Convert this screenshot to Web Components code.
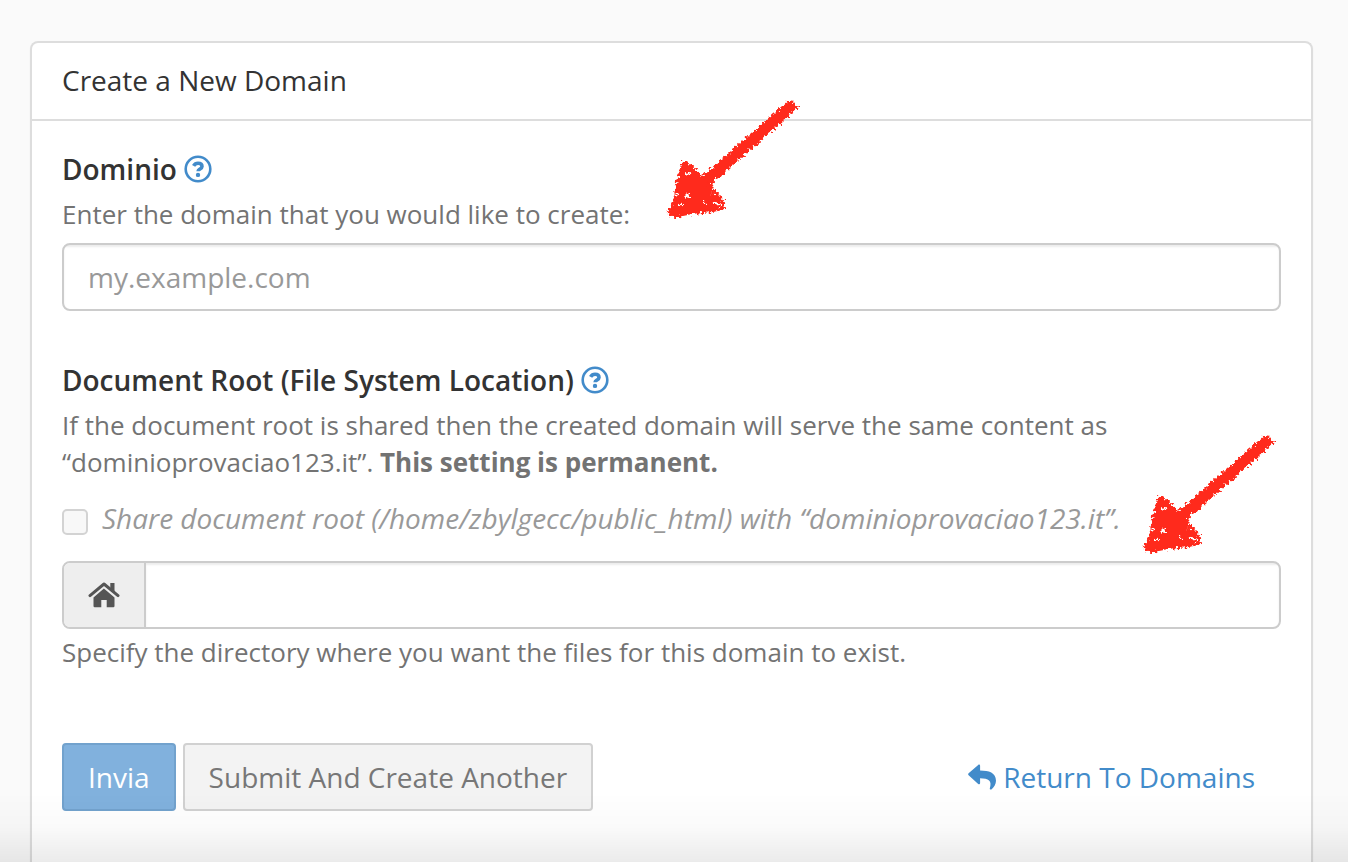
<!DOCTYPE html>
<html lang="en">
<head>
  <meta charset="utf-8">
  <meta name="viewport" content="width=device-width, initial-scale=1">
  <title>Create a New Domain</title>
  <style>
    body {
      margin: 0;
      background-color: #fafafa;
      font-family: "Open Sans", "Noto Sans", sans-serif;
    }
  </style>
</head>
<body>
  <domain-page></domain-page>

  <script>
    class HelpButton extends HTMLElement {
      constructor() {
        super();

        const shadow = this.attachShadow({ mode: "open" });

        shadow.innerHTML = `
          <style>
            :host {
              display: flex;
            }
            button {
              display: flex;
              padding: 0;
              border: 0;
              background: none;
              color: #428bca;
              cursor: pointer;
            }
            svg {
              width: 28px;
              height: 28px;
            }
          </style>

          <button type="button" aria-label="Help">
            <svg viewBox="0 0 28 28" fill="none" stroke="currentColor" aria-hidden="true">
              <circle cx="14" cy="14" r="12.3" stroke-width="2.6"/>
              <path d="M9.6 10.8C10.7 8.9 12.2 8.2 14 8.2c2.4 0 4 1.3 4 3.2 0 2.5-3.9 2.6-3.9 4.9" stroke-width="3.6"/>
              <circle cx="14" cy="19.9" r="2.2" fill="currentColor" stroke="none"/>
            </svg>
          </button>
        `;
      }
    }

    // Hand drawn arrow, pointing down and to the left
    class MarkerArrow extends HTMLElement {
      constructor() {
        super();

        const shadow = this.attachShadow({ mode: "open" });

        shadow.innerHTML = `
          <style>
            :host {
              display: block;
              pointer-events: none;
            }
            svg {
              display: block;
              width: 145px;
              height: 128px;
              overflow: visible;
            }
          </style>

          <svg viewBox="0 0 145 128" aria-hidden="true">
            <defs>
              <filter id="chalk" x="-10" y="-10" width="165" height="148" filterUnits="userSpaceOnUse" color-interpolation-filters="sRGB">
                <feTurbulence type="fractalNoise" baseFrequency="0.35" numOctaves="3" seed="4" result="noise"/>
                <feDisplacementMap in="SourceGraphic" in2="noise" scale="8" xChannelSelector="R" yChannelSelector="G"/>
              </filter>
            </defs>
            <g filter="url(#chalk)">
              <path d="M43 87L70 64L90 46L114 25L130 11" fill="none" stroke="#ff2a1c" stroke-width="12" stroke-linecap="square"/>
              <path d="M23 66L29 68L41 80L50 88L56 97L63 105L64 113L52 115L33 117L13 121L8 117L14 107L17 87Z" fill="#ff2a1c" stroke="#ff2a1c" stroke-width="2"/>
              <g fill="#fff">
                <ellipse cx="28" cy="77" rx="3" ry="1.5"/>
                <ellipse cx="27" cy="100" rx="2" ry="2.5"/>
                <ellipse cx="58" cy="108" rx="3.5" ry="1.8" transform="rotate(25 58 108)"/>
                <circle cx="17" cy="99" r="1.5"/>
                <circle cx="44" cy="107" r="1.3"/>
                <circle cx="52" cy="98" r="1.2"/>
                <circle cx="21" cy="109" r="1.2"/>
              </g>
            </g>
          </svg>
        `;
      }
    }

    class FormPanel extends HTMLElement {
      constructor() {
        super();

        const shadow = this.attachShadow({ mode: "open" });

        shadow.innerHTML = `
          <style>
            :host {
              display: block;
              background-color: #fff;
              border: 2px solid #ddd;
              border-bottom: 0;
              border-radius: 8px 8px 0 0;
              box-shadow: 0 2px 2px rgba(0, 0, 0, 0.05);
            }
            header {
              padding: 17px 30px 19px;
              border-bottom: 2px solid #ddd;
            }
            h1 {
              margin: 0;
              color: #333;
              font-size: 28px;
              font-weight: 400;
              line-height: 40px;
            }
            .body {
              padding: 31px 30px;
            }
          </style>

          <header>
            <h1><slot name="title"></slot></h1>
          </header>
          <div class="body">
            <slot></slot>
          </div>
        `;
      }
    }

    class FormField extends HTMLElement {
      constructor() {
        super();

        const shadow = this.attachShadow({ mode: "open" });

        const label = this.getAttribute("label");
        const placeholder = this.getAttribute("placeholder") || "";
        const addon = this.hasAttribute("home")
          ? `<span class="addon">
              <svg viewBox="0 0 32 26" fill="#555" aria-hidden="true">
                <path d="M15.9 6.6L26.5 15.6V24a1.2 1.2 0 0 1-1.2 1.2h-6.6V18h-5.4v7.2H6.7A1.2 1.2 0 0 1 5.5 24v-8.4z"/>
                <path d="M2 13.6L16 2L30 13.6" fill="none" stroke="#555" stroke-width="3" stroke-linecap="round" stroke-linejoin="round"/>
                <path d="M22.3 1h4.2v9.5l-4.2-3.5z"/>
              </svg>
            </span>`
          : "";

        shadow.innerHTML = `
          <style>
            :host {
              display: block;
              position: relative;
            }
            .caption {
              display: flex;
              align-items: center;
              gap: 7px;
            }
            label {
              color: #333;
              font-size: 28px;
              font-weight: 600;
              line-height: 34px;
            }
            .intro {
              margin: 10px 0;
            }
            .intro, .after {
              color: #737373;
              font-size: 26px;
              line-height: 37px;
            }
            .group {
              display: flex;
              box-sizing: border-box;
              height: 68px;
              border: 2px solid #ccc;
              border-radius: 8px;
              background-color: #fff;
              overflow: hidden;
            }
            .addon {
              display: flex;
              align-items: center;
              padding: 0 24px;
              border-right: 2px solid #ccc;
              background-color: #eee;
            }
            .addon svg {
              width: 32px;
              height: 26px;
            }
            input {
              flex: 1;
              min-width: 0;
              padding: 0 24px;
              border: 0;
              outline: 0;
              background: none;
              box-shadow: inset 0 2px 2px rgba(0, 0, 0, 0.075);
              color: #555;
              font: inherit;
              font-size: 28px;
            }
            input::placeholder {
              color: #999;
              opacity: 1;
            }
            .after {
              margin-top: 5px;
            }
          </style>

          <div class="caption">
            <label for="field">${label}</label>
            <help-button></help-button>
          </div>
          <div class="intro"><slot></slot></div>
          <slot name="option"></slot>
          <div class="group">
            ${addon}
            <input id="field" type="text" placeholder="${placeholder}">
          </div>
          <div class="after"><slot name="after"></slot></div>
          <slot name="marker"></slot>
        `;
      }
    }

    class ShareOption extends HTMLElement {
      constructor() {
        super();

        const shadow = this.attachShadow({ mode: "open" });

        shadow.innerHTML = `
          <style>
            :host {
              display: block;
              margin: 19px 0 24px;
            }
            label {
              display: flex;
              align-items: center;
              gap: 14px;
              color: #999;
              font-size: 28px;
              font-style: italic;
              line-height: 37px;
            }
            input {
              appearance: none;
              flex: none;
              box-sizing: border-box;
              width: 26px;
              height: 26px;
              margin: 6px 0 0;
              border: 2px solid #d3d3d3;
              border-radius: 5px;
              background-color: #f8f8f8;
            }
          </style>

          <label>
            <input type="checkbox" disabled>
            <span><slot></slot></span>
          </label>
        `;
      }
    }

    class FormActions extends HTMLElement {
      constructor() {
        super();

        const shadow = this.attachShadow({ mode: "open" });

        shadow.innerHTML = `
          <style>
            :host {
              display: flex;
              align-items: center;
              gap: 7px;
              margin-top: 72px;
              font-size: 28px;
              line-height: 40px;
            }
            button {
              padding: 12px 24px;
              border: 2px solid #d1d1d1;
              border-radius: 4px;
              background-color: #f3f3f3;
              color: #777;
              font: inherit;
            }
            .primary {
              border-color: #72a2cd;
              background-color: #81b1dd;
              color: #fff;
            }
            a {
              display: flex;
              align-items: center;
              gap: 7px;
              margin-left: auto;
              padding: 14px 26px;
              color: #428bca;
              text-decoration: none;
            }
            svg {
              width: 28px;
              height: 26px;
            }
          </style>

          <button class="primary" type="submit">Invia</button>
          <button type="button">Submit And Create Another</button>
          <a href="#domains">
            <svg viewBox="0 0 28 26" fill="currentColor" aria-hidden="true">
              <path d="M.6 9.3L10.2 .9C11 .2 12.1 .7 12.1 1.8v4.6C20.8 6.5 28 8.3 28 16.8c0 3.4-2.2 6.8-4.6 8.6-.8.5-1.9-.1-1.6-1 2.5-8-1.2-10.1-9.7-10.2V19c0 1.1-1.1 1.6-1.9.9L.6 11.3c-.6-.5-.6-1.4 0-2z"/>
            </svg>
            <span>Return To Domains</span>
          </a>
        `;
      }
    }

    class DomainPage extends HTMLElement {
      constructor() {
        super();

        const shadow = this.attachShadow({ mode: "open" });

        shadow.innerHTML = `
          <style>
            :host {
              display: flex;
              flex-direction: column;
              box-sizing: border-box;
              min-height: 100vh;
              padding: 41px 35px 0 30px;
            }
            form-panel {
              flex: 1;
            }
            form-field + form-field {
              margin-top: 52px;
            }
            marker-arrow {
              position: absolute;
            }
            .first {
              top: -56px;
              right: 476px;
            }
            .second {
              top: 68px;
              right: 0;
            }
            .fade {
              position: fixed;
              inset: auto 0 0;
              height: 70px;
              background: linear-gradient(rgba(0, 0, 0, 0), rgba(0, 0, 0, 0.02) 50%, rgba(0, 0, 0, 0.08));
              pointer-events: none;
            }
          </style>

          <form-panel>
            <span slot="title">Create a New Domain</span>
            <form>
              <form-field label="Dominio" placeholder="my.example.com">
                Enter the domain that you would like to create:
                <marker-arrow slot="marker" class="first"></marker-arrow>
              </form-field>
              <form-field label="Document Root (File System Location)" home>
                If the document root is shared then the created domain will serve the same content as “dominioprovaciao123.it”. <strong>This setting is permanent.</strong>
                <share-option slot="option">Share document root (/home/zbylgecc/public_html) with “dominioprovaciao123.it”.</share-option>
                <span slot="after">Specify the directory where you want the files for this domain to exist.</span>
                <marker-arrow slot="marker" class="second"></marker-arrow>
              </form-field>
              <form-actions></form-actions>
            </form>
          </form-panel>
          <div class="fade"></div>
        `;
      }
    }

    customElements.define("help-button", HelpButton);
    customElements.define("marker-arrow", MarkerArrow);
    customElements.define("form-panel", FormPanel);
    customElements.define("form-field", FormField);
    customElements.define("share-option", ShareOption);
    customElements.define("form-actions", FormActions);
    customElements.define("domain-page", DomainPage);
  </script>
</body>
</html>
